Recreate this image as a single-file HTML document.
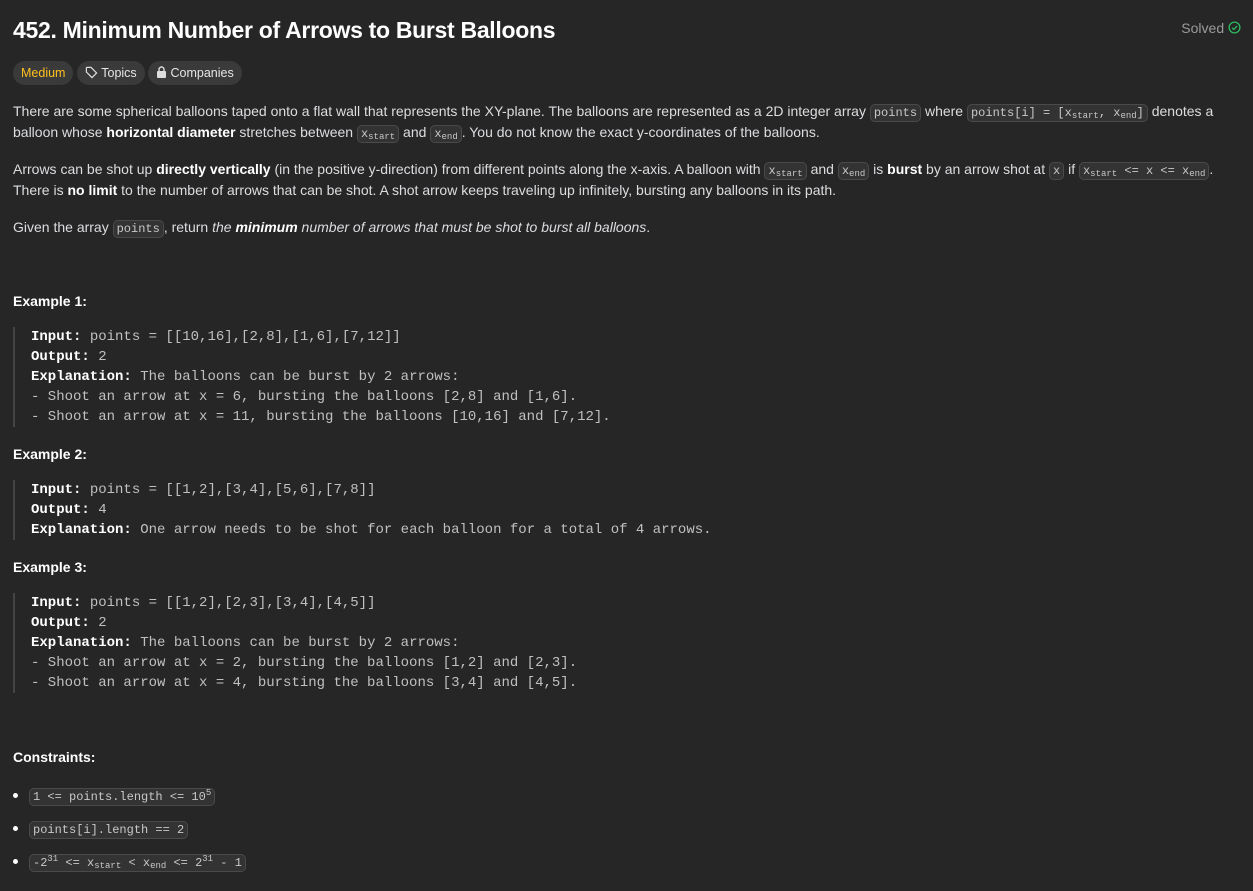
<!DOCTYPE html>
<html><head><meta charset="utf-8"><style>
body{margin:0;background:#262626;width:1253px;height:891px;overflow:hidden;font-family:"Liberation Sans",sans-serif;color:#dcdde0;font-size:14px;}
.a{position:absolute;left:13px;white-space:nowrap;}
h1{position:absolute;left:13px;top:17px;margin:0;font-size:23px;font-weight:600;color:#fff;letter-spacing:-0.3px}
.solved{position:absolute;right:12px;top:20px;color:#9a9a9a;font-size:14px}
.pill{position:absolute;top:61px;height:24px;border-radius:12px;background:#3a3a3a;font-size:12.5px;line-height:24px;padding:0 8px;color:#e6e6e6}
p{margin:0;line-height:21px;height:21px}
code{font-family:"Liberation Mono",monospace;font-size:12px;line-height:1;background:#333;border:1px solid #4a4a4a;border-radius:5px;padding:1px 3px;color:#c8c8c8}
sub{font-size:9px;vertical-align:-2px;line-height:0}
sup{font-size:9px;line-height:0}
.pre{position:absolute;left:13px;border-left:2px solid #444;padding-left:16px;font-family:"Liberation Mono",monospace;font-size:14px;line-height:20px;white-space:pre;color:#c0c0c0}
.pre b{color:#fff}
.h{font-weight:bold;color:#fff}
.li{position:absolute;left:13px;line-height:18px}
.li:before{content:"";position:absolute;left:0;top:7px;width:5px;height:5px;border-radius:50%;background:#fff}
.li code{margin-left:16px}
</style></head><body>
<h1>452. Minimum Number of Arrows to Burst Balloons</h1>
<div class="solved">Solved <svg width="13" height="13" viewBox="0 0 14 14" style="vertical-align:-1px"><circle cx="7" cy="7" r="5.8" fill="none" stroke="#2cbb5d" stroke-width="1.4"/><path d="M4.3 7.2l1.9 1.9 3.6-3.8" fill="none" stroke="#2cbb5d" stroke-width="1.4"/></svg></div>
<div class="pill" style="left:13px;color:#ffc01e">Medium</div>
<div class="pill" style="left:77px"><svg width="13" height="13" viewBox="0 0 14 14" style="vertical-align:-2px"><path d="M1.5 2v4.5l6 6 5-5-6-6H2z" fill="none" stroke="#ddd" stroke-width="1.3"/></svg> Topics</div>
<div class="pill" style="left:148px"><svg width="11" height="12" viewBox="0 0 11 12" style="vertical-align:-1px"><rect x="1" y="5" width="9" height="7" rx="1" fill="#ddd"/><path d="M3 5V3.5a2.5 2.5 0 015 0V5" fill="none" stroke="#ddd" stroke-width="1.4"/></svg> Companies</div>
<div class="a" style="top:101px"><p>There are some spherical balloons taped onto a flat wall that represents the XY-plane. The balloons are represented as a 2D integer array <code>points</code> where <code>points[i] = [x<sub>start</sub>, x<sub>end</sub>]</code> denotes a</p><p>balloon whose <span class="h">horizontal diameter</span> stretches between <code>x<sub>start</sub></code> and <code>x<sub>end</sub></code>. You do not know the exact y-coordinates of the balloons.</p></div>
<div class="a" style="top:159px"><p>Arrows can be shot up <span class="h">directly vertically</span> (in the positive y-direction) from different points along the x-axis. A balloon with <code>x<sub>start</sub></code> and <code>x<sub>end</sub></code> is <span class="h">burst</span> by an arrow shot at <code>x</code> if <code>x<sub>start</sub> &lt;= x &lt;= x<sub>end</sub></code>.</p><p>There is <span class="h">no limit</span> to the number of arrows that can be shot. A shot arrow keeps traveling up infinitely, bursting any balloons in its path.</p></div>
<div class="a" style="top:217px"><p>Given the array <code>points</code>, return <i>the <b style="color:#fff">minimum</b> number of arrows that must be shot to burst all balloons</i>.</p></div>
<div class="a h" style="top:293px">Example 1:</div>
<div class="pre" style="top:327px"><b>Input:</b> points = [[10,16],[2,8],[1,6],[7,12]]
<b>Output:</b> 2
<b>Explanation:</b> The balloons can be burst by 2 arrows:
- Shoot an arrow at x = 6, bursting the balloons [2,8] and [1,6].
- Shoot an arrow at x = 11, bursting the balloons [10,16] and [7,12].</div>
<div class="a h" style="top:446px">Example 2:</div>
<div class="pre" style="top:480px"><b>Input:</b> points = [[1,2],[3,4],[5,6],[7,8]]
<b>Output:</b> 4
<b>Explanation:</b> One arrow needs to be shot for each balloon for a total of 4 arrows.</div>
<div class="a h" style="top:559px">Example 3:</div>
<div class="pre" style="top:593px"><b>Input:</b> points = [[1,2],[2,3],[3,4],[4,5]]
<b>Output:</b> 2
<b>Explanation:</b> The balloons can be burst by 2 arrows:
- Shoot an arrow at x = 2, bursting the balloons [1,2] and [2,3].
- Shoot an arrow at x = 4, bursting the balloons [3,4] and [4,5].</div>
<div class="a h" style="top:749px">Constraints:</div>
<div class="li" style="top:786px"><code>1 &lt;= points.length &lt;= 10<sup>5</sup></code></div>
<div class="li" style="top:819px"><code>points[i].length == 2</code></div>
<div class="li" style="top:852px"><code>-2<sup>31</sup> &lt;= x<sub>start</sub> &lt; x<sub>end</sub> &lt;= 2<sup>31</sup> - 1</code></div>
</body></html>
